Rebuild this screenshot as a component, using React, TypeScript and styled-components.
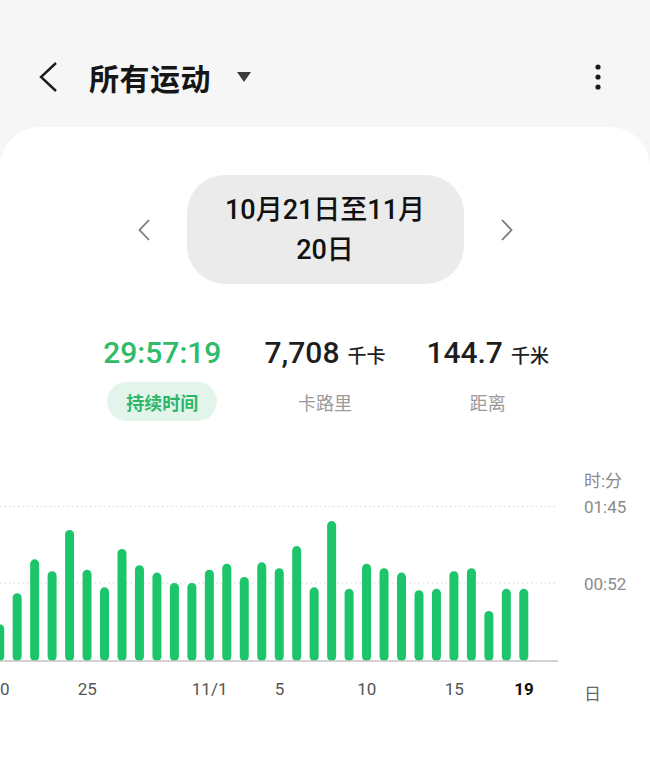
import React from 'react';
import styled, { createGlobalStyle } from 'styled-components';

const GlobalStyle = createGlobalStyle`
  html, body {
    margin: 0;
    padding: 0;
    background: #f6f6f6;
    font-family: Roboto, "Noto Sans CJK SC", "Noto Sans", sans-serif;
    color: #222;
  }
  * {
    box-sizing: border-box;
  }
`;

const Page = styled.div`
  width: 650px;
  height: 764px;
  overflow: hidden;
  display: flex;
  flex-direction: column;
`;

const Header = styled.header`
  display: flex;
  align-items: center;
  height: 56px;
  margin-top: 49px;
  margin-bottom: 22px;
  padding: 0 47px 0 38px;
`;

const IconButton = styled.button`
  display: flex;
  align-items: center;
  justify-content: center;
  padding: 0;
  border: none;
  background: none;
  color: #1c1c1c;
`;

const Title = styled.h1`
  margin: 0 0 0 31px;
  font-size: 30px;
  font-weight: 700;
  letter-spacing: 0.5px;
  color: #161616;
`;

const Caret = styled.span`
  margin-left: 26px;
  width: 0;
  height: 0;
  border-left: 7.5px solid transparent;
  border-right: 7.5px solid transparent;
  border-top: 10px solid #3c3c3c;
`;

const Spacer = styled.div`
  flex: 1;
`;

const Card = styled.main`
  flex: 1;
  background: #fff;
  border-radius: 40px 40px 0 0;
  padding-top: 48px;
  display: flex;
  flex-direction: column;
`;

const DateRow = styled.div`
  display: flex;
  align-items: center;
  justify-content: center;
  gap: 37px;
`;

const Arrow = styled.button`
  display: flex;
  padding: 0;
  border: none;
  background: none;
  color: #7a7a7a;
`;

const DatePill = styled.div`
  width: 277px;
  height: 109px;
  border-radius: 38px;
  background: #ebebeb;
  display: flex;
  flex-direction: column;
  align-items: center;
  justify-content: center;
  font-size: 27px;
  font-weight: 500;
  line-height: 40px;
  color: #111;
`;

const Stats = styled.section`
  margin-top: 49px;
  padding: 0 81px;
  display: grid;
  grid-template-columns: repeat(3, 1fr);
`;

const Stat = styled.div`
  display: flex;
  flex-direction: column;
  align-items: center;
  gap: 9px;
`;

const Value = styled.div<{ $active?: boolean }>`
  height: 40px;
  line-height: 40px;
  font-size: 30px;
  font-weight: 500;
  white-space: nowrap;
  color: ${p => (p.$active ? '#2fbb6b' : '#1e1e1e')};
`;

const Unit = styled.span`
  margin-left: 8px;
  font-size: 19px;
  font-weight: 500;
`;

const Label = styled.div<{ $active?: boolean }>`
  height: 39px;
  padding: 0 19px;
  border-radius: 20px;
  display: flex;
  align-items: center;
  font-size: 18px;
  font-weight: ${p => (p.$active ? 700 : 400)};
  color: ${p => (p.$active ? '#2fb56a' : '#9a9a9a')};
  background: ${p => (p.$active ? '#e3f5eb' : 'transparent')};
`;

const Chart = styled.svg`
  display: block;
  margin-top: 39px;
  font-family: Roboto, "Noto Sans CJK SC", sans-serif;
`;

// minutes per day, Oct 20 .. Nov 19
const minutes = [
  25, 46, 69, 61, 89, 62, 50, 76, 65, 60, 53, 53, 62, 66, 57, 67, 63, 78, 50, 95,
  49, 66, 63, 60, 48, 49, 61, 63, 34, 49, 49,
];

const ticks: { i: number; text: string; bold?: boolean }[] = [
  { i: 0, text: '20' },
  { i: 5, text: '25' },
  { i: 12, text: '11/1' },
  { i: 16, text: '5' },
  { i: 21, text: '10' },
  { i: 26, text: '15' },
  { i: 30, text: '19', bold: true },
];

const STEP = 17.47;
const BASE = 201;
const PX_PER_MIN = 1.473;
const PLOT_W = 558;

const ActivityChart: React.FC = () => (
  <Chart width={650} height={250} viewBox="0 0 650 250">
    <line x1={0} x2={PLOT_W} y1={46.5} y2={46.5} stroke="#d6d6d6" strokeWidth={1} strokeDasharray="1.5 3" />
    <line x1={0} x2={PLOT_W} y1={123} y2={123} stroke="#d6d6d6" strokeWidth={1} strokeDasharray="1.5 3" />
    {minutes.map((m, i) => {
      const x = i * STEP - 0.3;
      const h = m * PX_PER_MIN;
      return (
        <line
          key={i}
          x1={x}
          x2={x}
          y1={BASE - h + 4.5}
          y2={BASE - 4.5}
          stroke="#1dc56a"
          strokeWidth={9}
          strokeLinecap="round"
        />
      );
    })}
    <line x1={0} x2={PLOT_W} y1={BASE} y2={BASE} stroke="#c4c4c4" strokeWidth={1.5} />
    <g fontSize={17} fill="#8a8a8a">
      <text x={584} y={21} dominantBaseline="central">时:分</text>
      <text x={584} y={47} dominantBaseline="central">01:45</text>
      <text x={584} y={124} dominantBaseline="central">00:52</text>
      <text x={584} y={234} dominantBaseline="central" fill="#666">日</text>
    </g>
    <g fontSize={17} textAnchor="middle">
      {ticks.map(t => (
        <text
          key={t.text}
          x={t.i * STEP}
          y={229}
          dominantBaseline="central"
          fill={t.bold ? '#111' : '#555'}
          fontWeight={t.bold ? 700 : 400}
        >
          {t.text}
        </text>
      ))}
    </g>
  </Chart>
);

const App: React.FC = () => (
  <Page>
    <GlobalStyle />
    <Header>
      <IconButton aria-label="返回">
        <svg width="20" height="32" viewBox="0 0 20 32">
          <polyline points="18,2 3,16 18,30" fill="none" stroke="currentColor" strokeWidth="2.4" />
        </svg>
      </IconButton>
      <Title>所有运动</Title>
      <Caret />
      <Spacer />
      <IconButton aria-label="更多">
        <svg width="10" height="30" viewBox="0 0 10 30">
          <circle cx="5" cy="5" r="2.6" fill="currentColor" />
          <circle cx="5" cy="15" r="2.6" fill="currentColor" />
          <circle cx="5" cy="25" r="2.6" fill="currentColor" />
        </svg>
      </IconButton>
    </Header>
    <Card>
      <DateRow>
        <Arrow aria-label="上一个">
          <svg width="12" height="22" viewBox="0 0 12 22">
            <polyline points="11,1 1.5,11 11,21" fill="none" stroke="currentColor" strokeWidth="1.8" />
          </svg>
        </Arrow>
        <DatePill>
          <span>10月21日至11月</span>
          <span>20日</span>
        </DatePill>
        <Arrow aria-label="下一个">
          <svg width="12" height="22" viewBox="0 0 12 22">
            <polyline points="1,1 10.5,11 1,21" fill="none" stroke="currentColor" strokeWidth="1.8" />
          </svg>
        </Arrow>
      </DateRow>
      <Stats>
        <Stat>
          <Value $active>29:57:19</Value>
          <Label $active>持续时间</Label>
        </Stat>
        <Stat>
          <Value>
            7,708<Unit>千卡</Unit>
          </Value>
          <Label>卡路里</Label>
        </Stat>
        <Stat>
          <Value>
            144.7<Unit>千米</Unit>
          </Value>
          <Label>距离</Label>
        </Stat>
      </Stats>
      <ActivityChart />
    </Card>
  </Page>
);

export default App;
